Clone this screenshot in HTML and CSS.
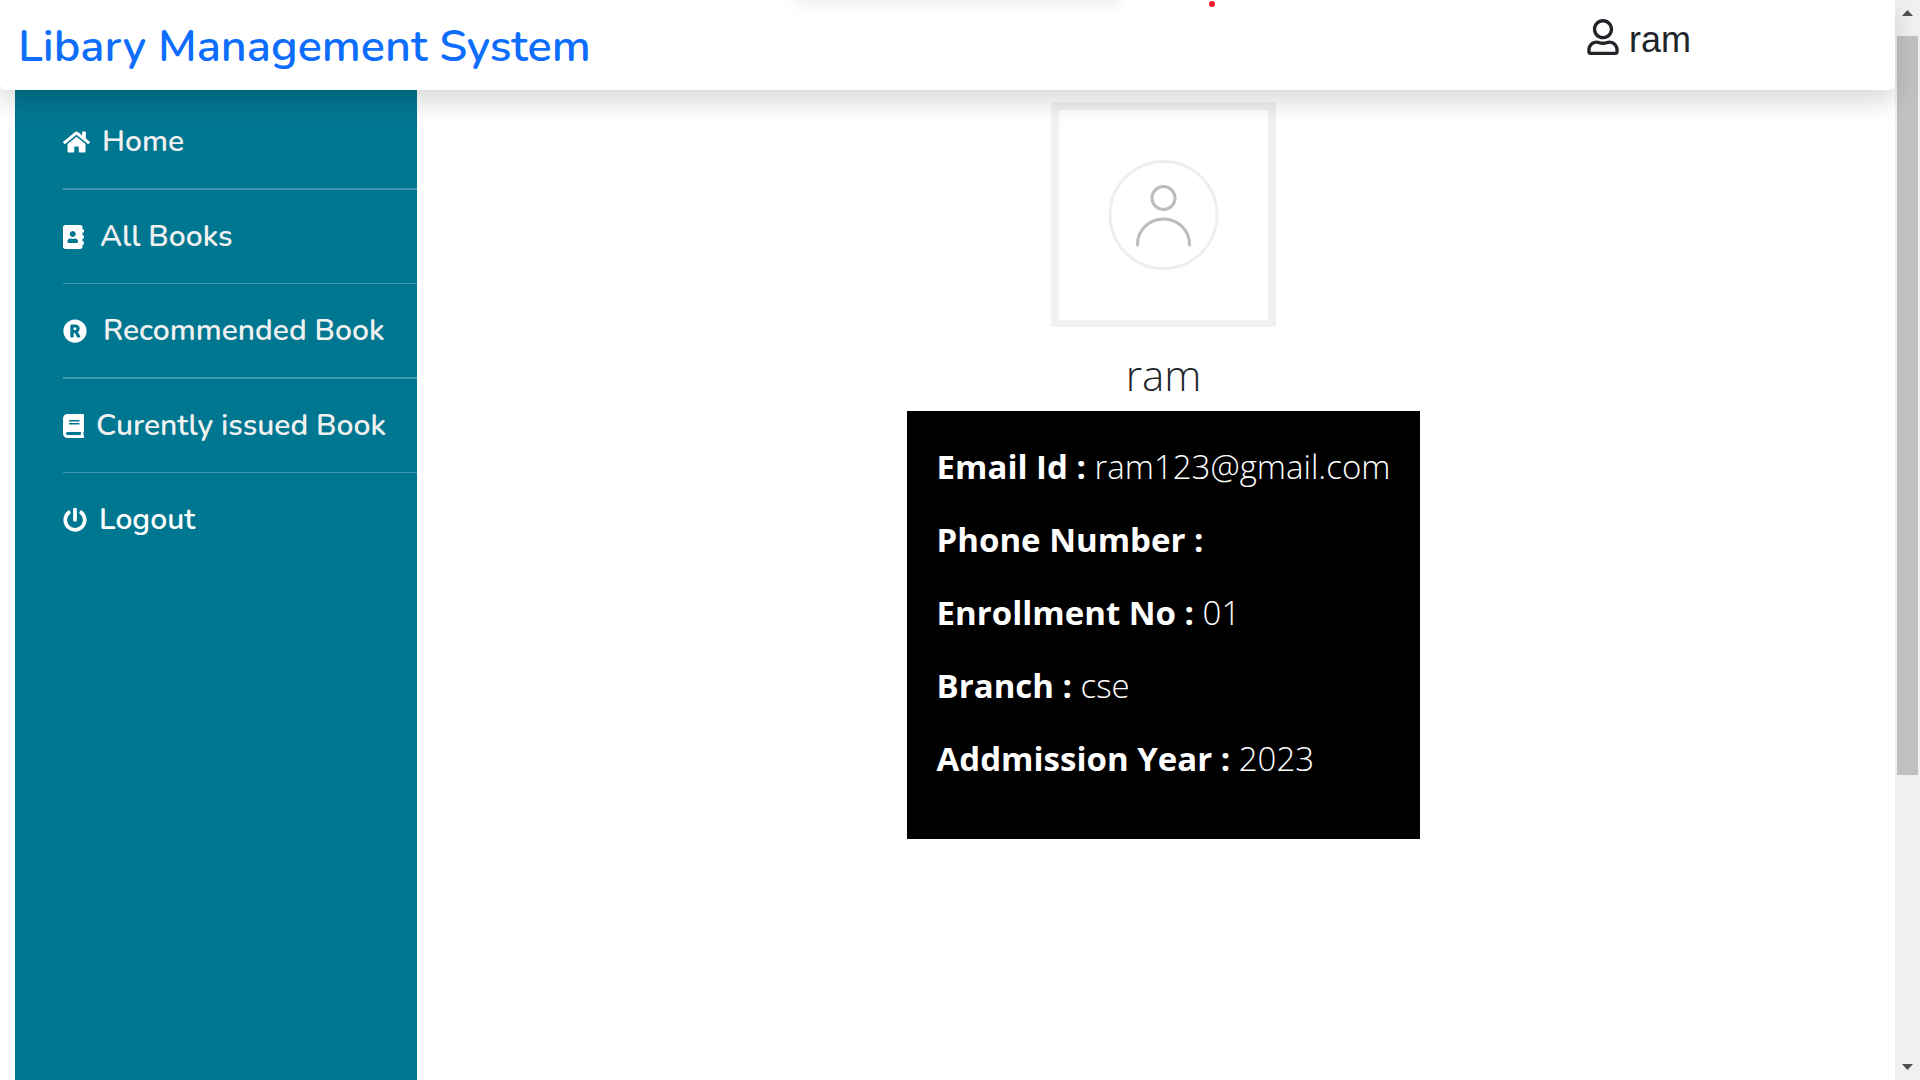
FILE: index.html
```html
<!DOCTYPE html>
<html lang="en">
<head>
<meta charset="utf-8">
<meta name="viewport" content="width=device-width, initial-scale=1">
<title>Libary Management System</title>
<link rel="stylesheet" href="styles.css">
</head>
<body>
<div class="page">
  <header class="topbar">
    <a class="brand" href="#">Libary Management System</a>
    <div class="user">
      <svg class="user-icon" viewBox="0 0 448 512" aria-hidden="true"><path d="M313.6 304c-28.700 0-42.500 16-89.600 16-47.100 0-60.800-16-89.600-16C60.200 304 0 364.200 0 438.400V464c0 26.500 21.500 48 48 48h352c26.500 0 48-21.500 48-48v-25.600c0-74.200-60.200-134.400-134.400-134.400zM400 464H48v-25.600c0-47.600 38.800-86.400 86.400-86.400 14.600 0 38.300 16 89.600 16 51.700 0 74.900-16 89.600-16 47.600 0 86.400 38.800 86.400 86.400V464zM224 288c79.500 0 144-64.500 144-144S303.500 0 224 0 80 64.500 80 144s64.500 144 144 144zm0-240c52.900 0 96 43.100 96 96s-43.100 96-96 96-96-43.100-96-96 43.100-96 96-96z"/></svg>
      <span>ram</span>
    </div>
    <span class="top-shade"></span>
    <span class="record-dot"></span>
  </header>
  <div class="content">
    <nav class="sidebar">
      <ul class="menu">
        <li><a class="menu-link" href="#"><svg class="icon-wide" viewBox="0 0 576 512" aria-hidden="true"><path d="M280.37 148.26L96 300.11V464a16 16 0 0 0 16 16l112.06-.29a16 16 0 0 0 15.92-16V368a16 16 0 0 1 16-16h64a16 16 0 0 1 16 16v95.64a16 16 0 0 0 16 16.05L464 480a16 16 0 0 0 16-16V300L295.67 148.26a12.19 12.19 0 0 0-15.3 0zM571.6 251.47L488 182.56V44.05a12 12 0 0 0-12-12h-56a12 12 0 0 0-12 12v72.61L318.47 43a48 48 0 0 0-61 0L4.34 251.47a12 12 0 0 0-1.6 16.9l25.5 31A12 12 0 0 0 45.15 301l235.22-193.74a12.19 12.19 0 0 1 15.3 0L530.9 301a12 12 0 0 0 16.9-1.6l25.5-31a12 12 0 0 0-1.7-16.93z"/></svg>Home</a></li>
        <li><a class="menu-link spaced" href="#"><svg class="icon-narrow" viewBox="0 0 448 512" aria-hidden="true"><path d="M436 160c6.600 0 12-5.400 12-12v-40c0-6.600-5.400-12-12-12h-20V48c0-26.500-21.500-48-48-48H48C21.500 0 0 21.500 0 48v416c0 26.500 21.500 48 48 48h320c26.500 0 48-21.500 48-48v-48h20c6.600 0 12-5.400 12-12v-40c0-6.600-5.400-12-12-12h-20v-64h20c6.600 0 12-5.400 12-12v-40c0-6.600-5.400-12-12-12h-20v-64h20zm-228-32c35.300 0 64 28.700 64 64s-28.700 64-64 64-64-28.700-64-64 28.700-64 64-64zm112 236.800c0 10.600-10 19.200-22.400 19.200H118.400C106 384 96 375.400 96 364.800v-19.200c0-31.800 30.100-57.600 67.200-57.600h5c12.300 5.100 25.700 8 39.800 8s27.600-2.900 39.800-8h5c37.100 0 67.200 25.800 67.200 57.600v19.200z"/></svg>All Books</a></li>
        <li><a class="menu-link spaced" href="#"><svg class="icon" viewBox="0 0 512 512" aria-hidden="true"><path d="M285.363 207.475c0 18.600-9.831 28.431-28.431 28.431h-29.876v-56.140h23.378c28.668 0 34.929 8.773 34.929 27.709zM504 256c0 136.967-111.033 248-248 248S8 392.967 8 256 119.033 8 256 8s248 111.033 248 248zM363.411 360.414c-46.729-84.825-43.299-78.636-44.702-80.980 23.432-15.172 37.945-42.979 37.945-74.486 0-54.244-31.500-89.252-105.498-89.252h-70.667c-13.255 0-24 10.745-24 24V372c0 13.255 10.745 24 24 24h22.567c13.255 0 24-10.745 24-24v-71.663h25.556l44.129 82.937a24.001 24.001 0 0 0 21.188 12.727h24.464c18.261-.001 29.829-19.591 21.018-35.587z"/></svg>Recommended Book</a></li>
        <li><a class="menu-link" href="#"><svg class="icon-narrow" viewBox="0 0 448 512" aria-hidden="true"><path d="M448 360V24c0-13.300-10.700-24-24-24H96C43 0 0 43 0 96v320c0 53 43 96 96 96h328c13.300 0 24-10.700 24-24v-16c0-7.500-3.500-14.300-8.900-18.700-4.200-15.400-4.200-59.300 0-74.700 5.400-4.300 8.900-11.100 8.900-18.600zM128 134c0-3.300 2.700-6 6-6h212c3.300 0 6 2.700 6 6v20c0 3.300-2.700 6-6 6H134c-3.300 0-6-2.700-6-6v-20zm0 64c0-3.300 2.700-6 6-6h212c3.300 0 6 2.700 6 6v20c0 3.300-2.700 6-6 6H134c-3.300 0-6-2.700-6-6v-20zm253.400 250H96c-17.700 0-32-14.300-32-32 0-17.600 14.400-32 32-32h285.400c-1.900 17.100-1.900 46.900 0 64z"/></svg>Curently issued Book</a></li>
        <li><a class="menu-link logout" href="#"><svg class="icon" viewBox="0 0 512 512" aria-hidden="true"><path d="M400 54.100c63 45 104 118.600 104 201.900 0 136.800-110.800 247.700-247.500 248C120 504.300 8.200 393 8 256.400 7.900 173.100 48.900 99.300 111.800 54.200c11.700-8.300 28-4.800 35 7.700L162.600 90c5.900 10.500 3.100 23.800-6.600 31-41.500 30.800-68 79.600-68 134.900-.1 92.300 74.500 168.100 168 168.100 91.600 0 168.600-74.200 168-169.100-.3-51.800-24.700-101.800-68.100-134-9.700-7.200-12.400-20.500-6.500-30.900l15.800-28.100c7-12.400 23.200-16.100 34.800-7.800zM296 264V24c0-13.300-10.700-24-24-24h-32c-13.300 0-24 10.700-24 24v240c0 13.300 10.700 24 24 24h32c13.300 0 24-10.700 24-24z"/></svg>Logout</a></li>
      </ul>
    </nav>
    <main class="profile">
      <svg class="avatar" viewBox="0 0 225 225" role="img" aria-label="Profile picture">
        <rect width="225" height="225" fill="#f1f1f1"/>
        <rect x="8" y="8" width="209" height="210" rx="2" fill="#fff"/>
        <circle cx="112.500" cy="113" r="53.500" fill="none" stroke="#efefef" stroke-width="3"/>
        <g fill="none" stroke="#bcbcbc" stroke-width="3" stroke-linecap="round">
          <circle cx="112.500" cy="96" r="11.500"/>
          <path d="M86.500 143v-1a26 25 0 0 1 52 0v1"/>
        </g>
      </svg>
      <h1 class="name">ram</h1>
      <section class="details">
        <p><b>Email Id :</b> ram123@gmail.com</p>
        <p><b>Phone Number :</b></p>
        <p><b>Enrollment No :</b> 01</p>
        <p><b>Branch :</b> cse</p>
        <p><b>Addmission Year :</b> 2023</p>
      </section>
    </main>
  </div>
</div>
<div class="scrollbar" aria-hidden="true">
  <svg class="arrow" viewBox="0 0 11 6"><path d="M0 6L5.500 0L11 6z"/></svg>
  <div class="track"><div class="thumb"></div></div>
  <svg class="arrow" viewBox="0 0 11 6"><path d="M0 0L5.500 6L11 0z"/></svg>
</div>
</body>
</html>
```
FILE: styles.css
```css
* {
  box-sizing: border-box;
}

body {
  margin: 0;
  height: 100vh;
  display: flex;
  overflow: hidden;
  background: #fff;
  color: #212529;
  font-family: "Open Sans", sans-serif;
}

a {
  color: inherit;
  text-decoration: none;
}

.page {
  flex: 1;
  min-width: 0;
  display: flex;
  flex-direction: column;
}

/* Top bar */
.topbar {
  position: relative;
  z-index: 1;
  display: flex;
  justify-content: space-between;
  align-items: flex-start;
  padding: 13px 204px 9px 18px;
  border-radius: 6px;
  background: #fff;
  box-shadow: 0 12px 24px rgba(0, 0, 0, .15);
}

.brand {
  color: #0d6efd;
  font-family: Nunito, Lato, sans-serif;
  font-size: 45px;
  font-weight: 600;
  line-height: 68px;
}

.user {
  display: flex;
  align-items: flex-start;
  gap: 10px;
  font-family: "Liberation Sans", Arial, sans-serif;
  font-size: 36px;
  line-height: 54px;
}

.user-icon {
  width: 32px;
  height: 36px;
  margin-top: 6px;
  fill: currentColor;
}

.top-shade {
  position: absolute;
  top: -10px;
  left: 796px;
  width: 324px;
  height: 6px;
  border-radius: 6px;
  box-shadow: 0 4px 16px rgba(0, 0, 0, .2);
}

.record-dot {
  position: absolute;
  top: 1px;
  left: 1209px;
  width: 6px;
  height: 6px;
  border-radius: 50%;
  background: #ed1c24;
}

/* Sidebar */
.content {
  flex: 1;
  display: flex;
  padding-left: 15px;
}

.sidebar {
  width: 402px;
  padding: 5px 0 0 48px;
  background: #007791;
}

.menu {
  margin: 0;
  padding: 0;
  list-style: none;
}

.menu li {
  border-bottom: 1px solid rgba(255, 255, 255, .25);
}

.menu li:nth-child(odd) {
  border-bottom-width: 2px;
}

.menu li:last-child {
  border-bottom: 0;
}

.menu-link {
  display: flex;
  align-items: center;
  gap: 12px;
  height: 93px;
  color: #f1f1f1;
  font-family: Nunito, Lato, sans-serif;
  font-size: 30px;
  font-weight: 600;
  white-space: nowrap;
}

.menu-link.spaced {
  gap: 16px;
}

.menu-link.logout {
  color: #fff;
}

.menu-link svg {
  height: 24px;
  fill: #fff;
}

.icon {
  width: 24px;
}

.icon-narrow {
  width: 21px;
}

.icon-wide {
  width: 27px;
}

/* Profile */
.profile {
  flex: 1;
  display: flex;
  flex-direction: column;
  align-items: center;
  padding: 12px 0 0 15px;
}

.avatar {
  width: 225px;
  height: 225px;
}

.name {
  margin: 16px 0 4px;
  font-size: 42px;
  font-weight: 300;
  line-height: 64px;
}

.details {
  padding: 31px 30px 55px;
  background: #000;
  color: #fff;
  font-size: 33px;
  font-weight: 300;
  line-height: 50px;
}

.details p {
  margin: 0 0 23px;
}

.details p:last-child {
  margin-bottom: 0;
}

.details b {
  font-weight: 700;
}

/* Window scrollbar */
.scrollbar {
  width: 25px;
  display: flex;
  flex-direction: column;
  align-items: center;
  gap: 20px;
  padding: 10px 0;
  background: #f0f0f0;
}

.arrow {
  width: 11px;
  height: 6px;
  fill: #505050;
}

.track {
  flex: 1;
  width: 21px;
}

.thumb {
  height: calc(100% * 11 / 15);
  background: #c1c1c1;
}
```
